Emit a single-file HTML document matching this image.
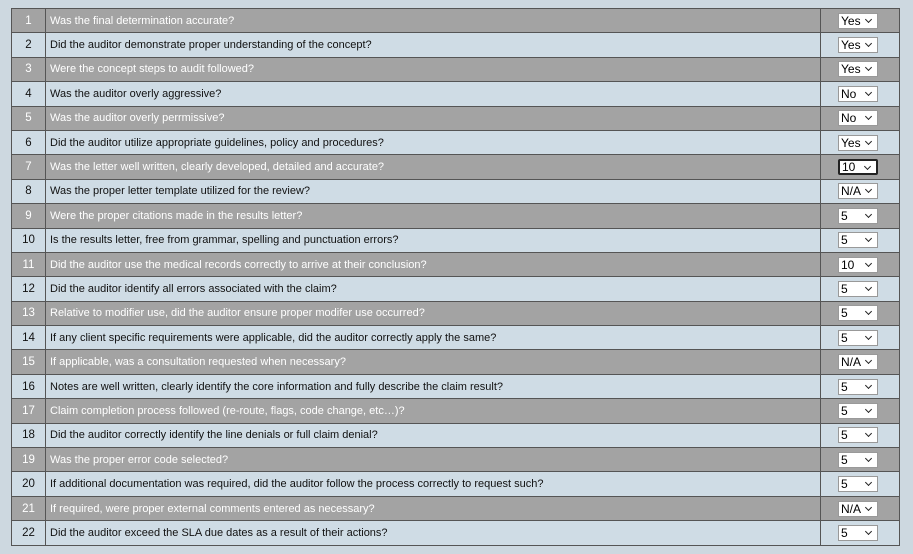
<!DOCTYPE html>
<html><head><style>
body{margin:0;background:#cdd8e0;width:913px;height:554px;overflow:hidden;font-family:"Liberation Sans",Arial,sans-serif;font-size:11px}
table{position:absolute;left:11px;top:8px;width:889px;border-collapse:collapse;border:1px solid #555}
tr{height:24.4px}
td{border:1px solid #555;padding:0;vertical-align:middle;line-height:14px}
tr:nth-child(odd){background:#a3a3a3;color:#fff}
tr:nth-child(even){background:#cfdce5;color:#111}
td.n{width:33px;text-align:center;font-size:11.5px}
td.q{padding-left:4px}
td.s{width:78px}
.sel{margin-left:17px;width:40px;height:16px;box-sizing:border-box;background:#fff;border:1px solid #999;color:#000;font-size:12px;line-height:14px;padding-left:2px;position:relative}
.sel:after{content:"";position:absolute;right:6px;top:3px;width:4px;height:4px;border-right:1.6px solid #222;border-bottom:1.6px solid #222;transform:rotate(45deg)}
.f{border:2px solid #222;border-radius:2px;line-height:12px}
</style></head><body>
<table>
<tr><td class="n">1</td><td class="q">Was the final determination accurate?</td><td class="s"><div class="sel">Yes</div></td></tr>
<tr><td class="n">2</td><td class="q">Did the auditor demonstrate proper understanding of the concept?</td><td class="s"><div class="sel">Yes</div></td></tr>
<tr><td class="n">3</td><td class="q">Were the concept steps to audit followed?</td><td class="s"><div class="sel">Yes</div></td></tr>
<tr><td class="n">4</td><td class="q">Was the auditor overly aggressive?</td><td class="s"><div class="sel">No</div></td></tr>
<tr><td class="n">5</td><td class="q">Was the auditor overly perrmissive?</td><td class="s"><div class="sel">No</div></td></tr>
<tr><td class="n">6</td><td class="q">Did the auditor utilize appropriate guidelines, policy and procedures?</td><td class="s"><div class="sel">Yes</div></td></tr>
<tr><td class="n">7</td><td class="q">Was the letter well written, clearly developed, detailed and accurate?</td><td class="s"><div class="sel f">10</div></td></tr>
<tr><td class="n">8</td><td class="q">Was the proper letter template utilized for the review?</td><td class="s"><div class="sel">N/A</div></td></tr>
<tr><td class="n">9</td><td class="q">Were the proper citations made in the results letter?</td><td class="s"><div class="sel">5</div></td></tr>
<tr><td class="n">10</td><td class="q">Is the results letter, free from grammar, spelling and punctuation errors?</td><td class="s"><div class="sel">5</div></td></tr>
<tr><td class="n">11</td><td class="q">Did the auditor use the medical records correctly to arrive at their conclusion?</td><td class="s"><div class="sel">10</div></td></tr>
<tr><td class="n">12</td><td class="q">Did the auditor identify all errors associated with the claim?</td><td class="s"><div class="sel">5</div></td></tr>
<tr><td class="n">13</td><td class="q">Relative to modifier use, did the auditor ensure proper modifer use occurred?</td><td class="s"><div class="sel">5</div></td></tr>
<tr><td class="n">14</td><td class="q">If any client specific requirements were applicable, did the auditor correctly apply the same?</td><td class="s"><div class="sel">5</div></td></tr>
<tr><td class="n">15</td><td class="q">If applicable, was a consultation requested when necessary?</td><td class="s"><div class="sel">N/A</div></td></tr>
<tr><td class="n">16</td><td class="q">Notes are well written, clearly identify the core information and fully describe the claim result?</td><td class="s"><div class="sel">5</div></td></tr>
<tr><td class="n">17</td><td class="q">Claim completion process followed (re-route, flags, code change, etc…)?</td><td class="s"><div class="sel">5</div></td></tr>
<tr><td class="n">18</td><td class="q">Did the auditor correctly identify the line denials or full claim denial?</td><td class="s"><div class="sel">5</div></td></tr>
<tr><td class="n">19</td><td class="q">Was the proper error code selected?</td><td class="s"><div class="sel">5</div></td></tr>
<tr><td class="n">20</td><td class="q">If additional documentation was required, did the auditor follow the process correctly to request such?</td><td class="s"><div class="sel">5</div></td></tr>
<tr><td class="n">21</td><td class="q">If required, were proper external comments entered as necessary?</td><td class="s"><div class="sel">N/A</div></td></tr>
<tr><td class="n">22</td><td class="q">Did the auditor exceed the SLA due dates as a result of their actions?</td><td class="s"><div class="sel">5</div></td></tr>
</table>
</body></html>
